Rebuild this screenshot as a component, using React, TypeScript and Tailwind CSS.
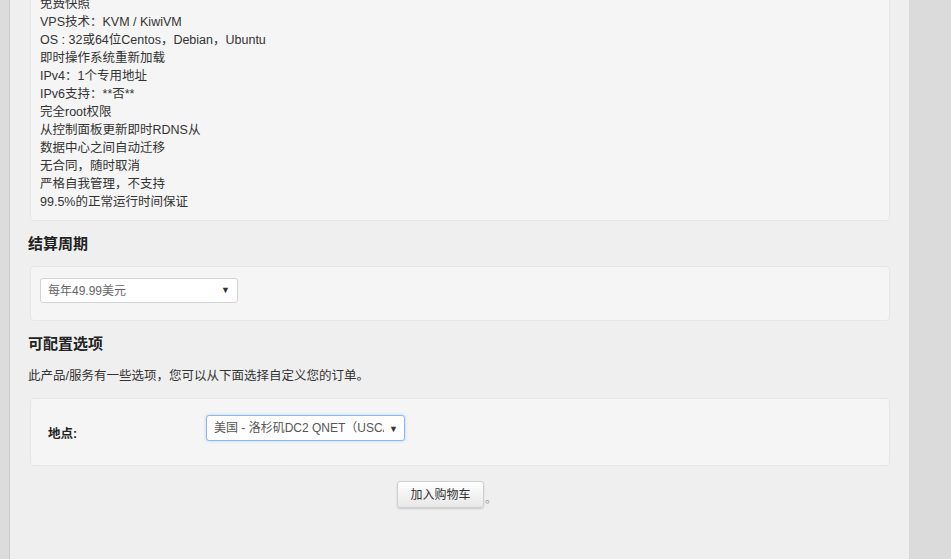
import React from 'react'

const features = [
  '免费快照',
  'VPS技术：KVM / KiwiVM',
  'OS : 32或64位Centos，Debian，Ubuntu',
  '即时操作系统重新加载',
  'IPv4：1个专用地址',
  'IPv6支持：**否**',
  '完全root权限',
  '从控制面板更新即时RDNS从',
  '数据中心之间自动迁移',
  '无合同，随时取消',
  '严格自我管理，不支持',
  '99.5%的正常运行时间保证',
]

function Caret() {
  return <span className="text-[9px] text-[#333] leading-none">▼</span>
}

export default function App() {
  return (
    <div
      className="flex h-[559px] w-[951px] overflow-hidden bg-[#dbdbdb] text-[12px] text-[#333]"
      style={{ fontFamily: '"Liberation Sans", Arial, "Noto Sans CJK SC", sans-serif' }}
    >
      <div className="w-[10px] shrink-0 bg-[#dcdcdc] border-r border-[#cfcfcf]" />
      <div className="w-[899px] shrink-0 bg-[#efefef] pl-[18px] pr-[19px] shadow-[2px_0_4px_rgba(0,0,0,0.12)]">
        {/* product description */}
        <div className="ml-[2px] -mt-[16px] rounded-[4px] border border-[#e6e6e6] bg-[#f5f5f5] px-[9px] pt-[10px] pb-[9px] text-[12.5px] leading-[18px]">
          {features.map(f => (
            <div key={f}>{f}</div>
          ))}
        </div>

        <h3 className="mt-[13px] text-[15px] font-bold leading-[20px] text-[#222]">结算周期</h3>
        <div className="ml-[2px] mt-[12px] h-[55px] rounded-[4px] border border-[#e6e6e6] bg-[#f5f5f5] px-[9px] pt-[11px]">
          <div className="flex h-[25px] w-[198px] items-center justify-between rounded-[3px] border border-[#d4d4d4] bg-white pl-[7px] pr-[7px] text-[#666]">
            <span>每年49.99美元</span>
            <Caret />
          </div>
        </div>

        <h3 className="mt-[13px] text-[15px] font-bold leading-[20px] text-[#222]">可配置选项</h3>
        <p className="mt-[13px] text-[12.5px] leading-[18px]">此产品/服务有一些选项，您可以从下面选择自定义您的订单。</p>

        <div className="ml-[2px] mt-[13px] flex h-[68px] items-start rounded-[4px] border border-[#e6e6e6] bg-[#f5f5f5] pt-[16px]">
          <div className="ml-[17px] mt-[10px] w-[158px] text-[12.5px] font-bold leading-[18px] text-[#222]">地点:</div>
          <div className="flex h-[26px] w-[199px] items-center rounded-[3px] border border-[#8db7ef] bg-white pl-[7px] pr-[6px] text-[#555] shadow-[0_0_3px_rgba(102,175,233,0.5)]">
            <span className="w-[170px] overflow-hidden whitespace-nowrap">美国 - 洛杉矶DC2 QNET（USCA_2）</span>
            <span className="ml-auto"><Caret /></span>
          </div>
        </div>

        <div className="mt-[15px] flex items-end pl-[369px]">
          <button className="h-[27px] w-[87px] rounded-[3px] border border-[#cfcfcf] bg-gradient-to-b from-white to-[#e8e8e8] text-[12px] text-[#333] shadow-[0_1px_2px_rgba(0,0,0,0.15)]">
            加入购物车
          </button>
          <span className="ml-[1px] leading-[18px] text-[#999]">。</span>
        </div>
      </div>
      <div className="flex-1 bg-[#dbdbdb]" />
    </div>
  )
}
